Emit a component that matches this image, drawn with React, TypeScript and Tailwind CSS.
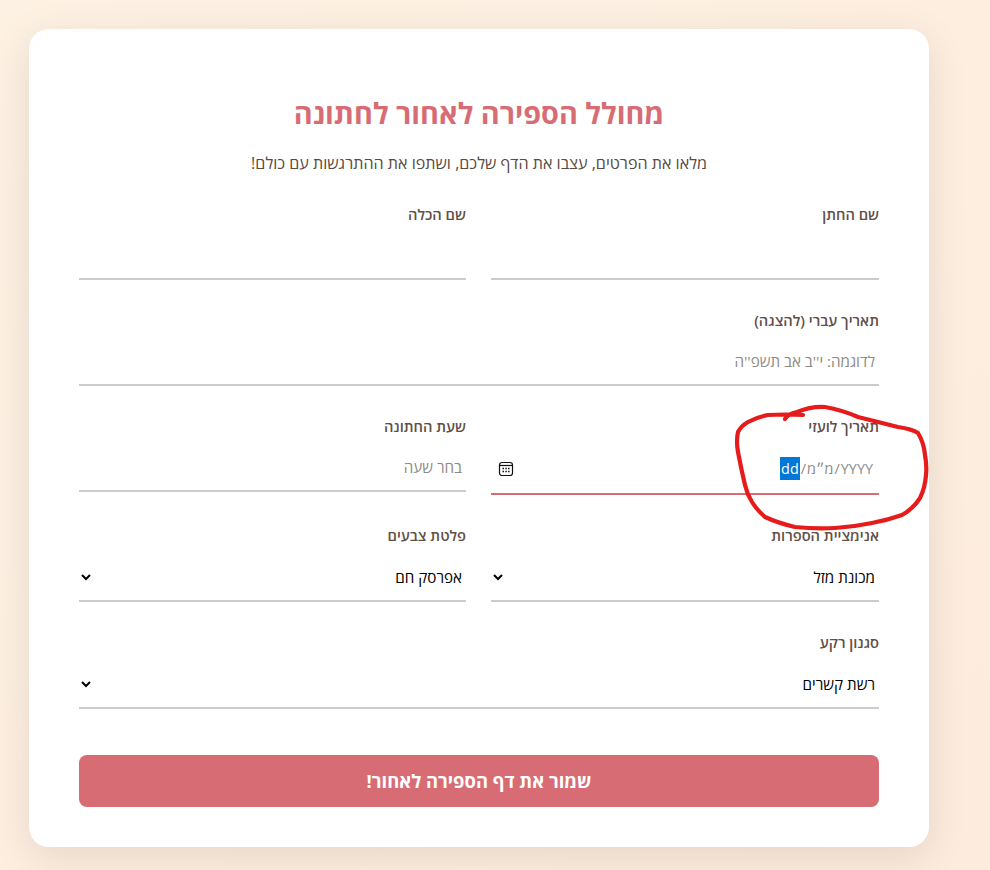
const fontStack = "font-['Open_Sans','Noto_Sans',sans-serif]";

const Label = ({ text }: { text: string }) => (
  <label className="block mb-[8px] text-[14.7px] leading-[19px] font-semibold text-[#5f5049]">{text}</label>
);

const TextInput = ({ placeholder }: { placeholder?: string }) => (
  <input
    type="text"
    placeholder={placeholder}
    className="block w-full h-[48px] px-[4px] text-[15.2px] bg-transparent border-b-2 border-[#cccccc] outline-none placeholder:text-[#8f8a85]"
  />
);

const SelectField = ({ label, value }: { label: string; value: string }) => (
  <div>
    <Label text={label} />
    <select className="block w-full h-[49px] text-[15.2px] text-black bg-white border-b-2 border-[#cccccc] outline-none" defaultValue={value}>
      <option>{value}</option>
    </select>
  </div>
);

export default function App() {
  return (
    <div dir="rtl" className={`${fontStack} relative h-[870px] overflow-hidden bg-gradient-to-br from-[#fdf1e3] to-[#fdecdd]`}>
      <div className="absolute left-[29px] top-[29px] w-[900px] h-[818px] bg-white rounded-[20px] px-[50px] pt-[62px] shadow-[0_10px_40px_rgba(0,0,0,0.1)]">
        <h1 className="text-center text-[28.8px] leading-[44px] font-bold text-[#d86c75]">מחולל הספירה לאחור לחתונה</h1>
        <p className="mt-[17px] text-center text-[16.1px] leading-[22px] text-[#5a4a42]">מלאו את הפרטים, עצבו את הדף שלכם, ושתפו את ההתרגשות עם כולם!</p>

        <div className="mt-[31px] flex flex-col gap-[31px]">
          <div className="grid grid-cols-[388px_387px] gap-[25px]">
            <div>
              <Label text="שם החתן" />
              <TextInput />
            </div>
            <div>
              <Label text="שם הכלה" />
              <TextInput />
            </div>
          </div>
          <div>
            <Label text="תאריך עברי (להצגה)" />
            <TextInput placeholder="לדוגמה: י''ב אב תשפ''ה" />
          </div>
          <div className="grid grid-cols-[388px_387px] gap-[25px]">
            <div>
              <Label text="תאריך לועזי" />
              <div className="flex h-[51px] items-center justify-between border-b-2 border-[#d86c75] pl-[7px] pr-[6px] text-[14.4px] text-[#8f8a85]">
                <span dir="ltr" className="flex items-center">
                  <span className="bg-[#0078d7] text-white leading-[23px] px-[1px]">dd</span>
                  <span className="mx-[1px]">/</span>
                  <span dir="rtl">מ״מ</span>
                  <span className="mx-[1px]">/</span>
                  <span>YYYY</span>
                </span>
                <svg width="16" height="16" viewBox="0 0 16 16" fill="none" stroke="#111" strokeWidth="1.2">
                  <rect x="1.5" y="1.5" width="13" height="13" rx="2.5" />
                  <path d="M1.5 4.5h13" />
                  <path d="M4.5 7.5h1.5M7.3 7.5h1.5M10 7.5h1.5M4.5 10.5h1.5M7.3 10.5h1.5M10 10.5h1.5" strokeWidth="1.5" />
                </svg>
              </div>
            </div>
            <div>
              <Label text="שעת החתונה" />
              <TextInput placeholder="בחר שעה" />
            </div>
          </div>
          <div className="grid grid-cols-[388px_387px] gap-[25px]">
            <SelectField label="אנימציית הספרות" value="מכונת מזל" />
            <SelectField label="פלטת צבעים" value="אפרסק חם" />
          </div>
          <SelectField label="סגנון רקע" value="רשת קשרים" />
        </div>

        <button className="mt-[46px] block w-full h-[52px] rounded-[8px] bg-[#d86c75] text-white text-[18.4px] font-bold">שמור את דף הספירה לאחור!</button>
      </div>

      {/* red marker circle drawn over the screenshot */}
      <svg className="absolute left-0 top-0 pointer-events-none" width="990" height="870" fill="none">
        <path
          d="M785 419 Q788 414 797 412 Q812 406 825 407 Q842 410 858 417 L898 427 Q912 429 918 433 Q924 443 925 455 Q927 466 926 475 Q925 488 920 498 Q913 509 902 515 Q888 520 872 523 Q853 527 835 528 Q815 529 795 527 Q778 523 765 517 Q757 510 752 502 Q747 494 745 485 Q741 468 738 452 Q736 441 738 432 Q741 426 748 422 Q757 417 768 415 Q785 414 803 415"
          stroke="#e61c1c"
          strokeWidth="4.2"
          strokeLinecap="round"
          strokeLinejoin="round"
        />
      </svg>
    </div>
  );
}
